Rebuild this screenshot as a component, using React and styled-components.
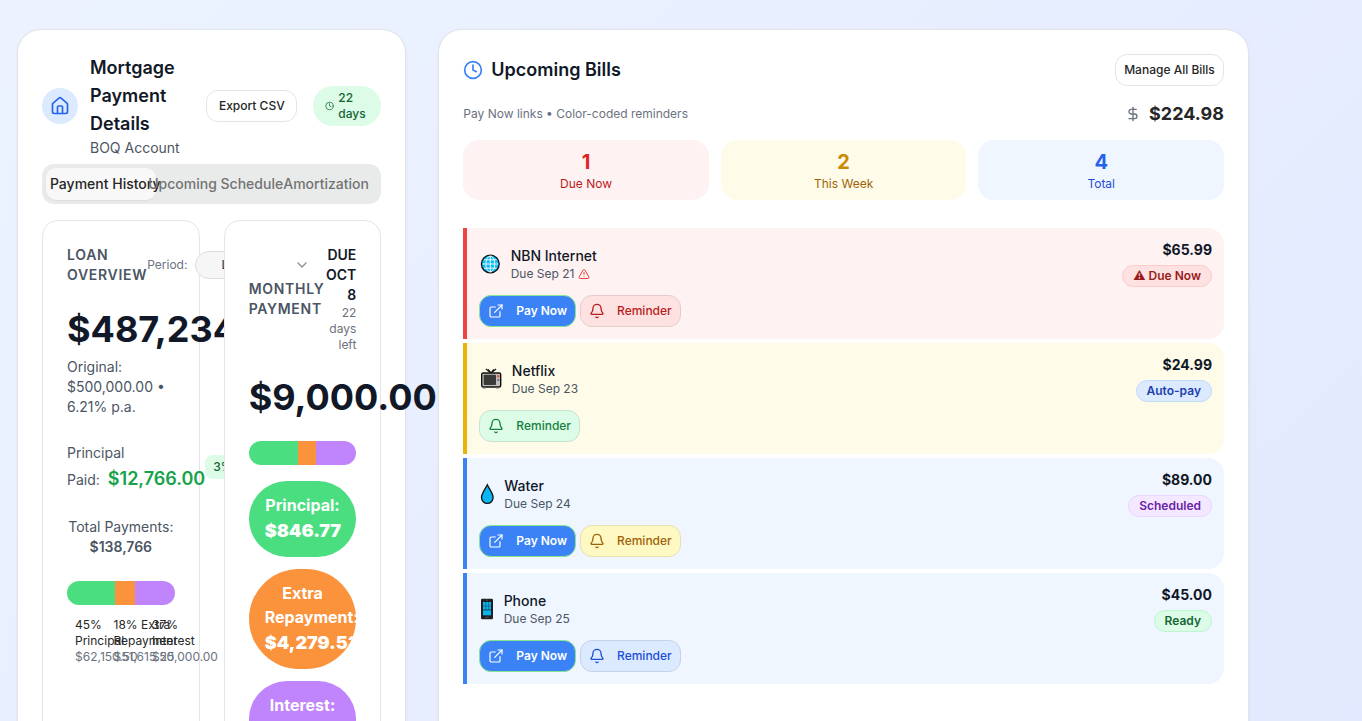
import React from "react";
import styled, { createGlobalStyle } from "styled-components";
import { House, Clock, ChevronDown, DollarSign, ExternalLink, Bell, TriangleAlert } from "lucide-react";

const GlobalStyle = createGlobalStyle`
  *, *::before, *::after { box-sizing: border-box; }
  body { margin: 0; overflow: hidden; font-family: Inter, "Liberation Sans", sans-serif; font-size: 16px; line-height: 24px; color: #262626; }
  p, h2, h3 { margin: 0; font-weight: inherit; }
  button { font-family: inherit; }
  svg { display: block; }
`;

const Page = styled.main`
  height: 100vh;
  overflow: hidden;
  padding: 29px 0 0 17px;
  background: linear-gradient(135deg, #ecf3ff 0%, #e3e9fe 100%);
`;

const Columns = styled.div`
  display: grid;
  grid-template-columns: 389.33px 810.67px;
  gap: 32px;
`;

const Panel = styled.section`
  height: 760px;
  min-width: 0;
  padding: 24px;
  background: #fff;
  border: 1px solid #e2e4e8;
  border-radius: 24px;
  box-shadow: 0 1px 3px rgba(0, 0, 0, 0.06);
`;

const MortgageHeader = styled.header`
  display: flex;
  align-items: center;
  height: 104px;
`;

const HomeBadge = styled.div`
  display: flex;
  flex: none;
  align-items: center;
  justify-content: center;
  width: 36px;
  height: 36px;
  margin-right: 12px;
  border-radius: 50%;
  background: #dbeafe;
  color: #2563eb;
`;

const MortgageHeading = styled.div`
  width: 116.3px;
  flex: none;
`;

const Title = styled.h2`
  font-size: 18px;
  line-height: 28px;
  font-weight: 600;
  color: #111827;
`;

const Account = styled.p`
  font-size: 14px;
  line-height: 20px;
  color: #4b5563;
`;

const OutlineButton = styled.button`
  flex: none;
  width: ${(p) => p.$width}px;
  height: 32px;
  padding: 0;
  border: 1px solid #e3e5e4;
  border-radius: 12px;
  background: #fff;
  color: #262626;
  font-size: 12px;
  line-height: 16px;
  font-weight: 500;
  white-space: nowrap;
`;

const DaysBadge = styled.div`
  display: flex;
  align-items: center;
  gap: 4px;
  width: 68px;
  height: 40px;
  margin-left: 16px;
  padding: 4px 12px;
  border-radius: 20px;
  background: #dcfce7;
  color: #166534;
  font-size: 12px;
  line-height: 16px;
  font-weight: 500;
`;

const Tabs = styled.div`
  display: grid;
  grid-template-columns: repeat(3, minmax(0, 1fr));
  height: 40px;
  margin-top: 6px;
  padding: 4px;
  border-radius: 12px;
  background: #e9ebea;
`;

const Tab = styled.button`
  display: flex;
  align-items: center;
  justify-content: center;
  min-width: 0;
  padding: 0 0 0 8px;
  border: 0;
  border-radius: 10px;
  background: ${(p) => (p.$active ? "#f8f8f8" : "transparent")};
  box-shadow: ${(p) => (p.$active ? "0 1px 2px rgba(0,0,0,0.06)" : "none")};
  color: ${(p) => (p.$active ? "#262626" : "#737373")};
  font-size: 14px;
  line-height: 20px;
  font-weight: 500;
  white-space: nowrap;
`;

const LoanGrid = styled.div`
  display: grid;
  grid-template-columns: repeat(2, minmax(0, 1fr));
  gap: 24px;
  margin-top: 16px;
`;

const LoanCard = styled.article`
  height: 620px;
  min-width: 0;
  padding: 24px;
  border: 1px solid #e3e5e8;
  border-radius: 16px;
  background: #fff;
`;

const PaymentCard = styled(LoanCard)`
  position: relative;
`;

const CardHead = styled.div`
  display: flex;
  align-items: center;
  justify-content: space-between;
  height: ${(p) => p.$height}px;
`;

const Overline = styled.h3`
  flex: none;
  font-size: 14px;
  line-height: 20px;
  font-weight: 600;
  letter-spacing: 0.7px;
  color: #4b5563;
`;

const Period = styled.div`
  display: flex;
  align-items: center;
  flex: none;
  gap: 8px;
  color: #6b7280;
  font-size: 12px;
  line-height: 16px;
`;

const Select = styled.div`
  display: flex;
  align-items: center;
  justify-content: space-between;
  width: 128px;
  height: 28px;
  padding: 0 12px;
  border: 1px solid #dcdede;
  border-radius: 14px;
  background: #f6f6f6;
  color: #262626;
`;

const SelectValue = styled.span`
  padding-left: 13px;
`;

const SelectChevron = styled(ChevronDown)`
  position: relative;
  z-index: 1;
  opacity: 0.5;
`;

const Amount = styled.p`
  margin-top: 24px;
  font-size: 36px;
  line-height: 40px;
  font-weight: 700;
  letter-spacing: ${(p) => p.$tracking || 0}px;
  color: #111827;
  white-space: nowrap;
`;

const LoanTerms = styled.p`
  margin-top: 8px;
  color: #4b5563;
  font-size: 14px;
  line-height: 20px;
`;

const PaidRow = styled.div`
  display: flex;
  align-items: center;
  height: 52px;
  margin-top: 24px;
`;

const PaidText = styled.div`
  flex: none;
  color: #4b5563;
  font-size: 14px;
  line-height: 24px;
`;

const PaidLine = styled.div`
  display: flex;
  align-items: baseline;
  gap: 8px;
  line-height: 28px;
`;

const PaidValue = styled.span`
  font-size: 18px;
  font-weight: 600;
  color: #16a34a;
`;

const PaidPercent = styled.span`
  flex: none;
  padding: 4px 8px;
  border-radius: 8px;
  background: #dcfce7;
  color: #166534;
  font-size: 12px;
  line-height: 16px;
  font-weight: 500;
`;

const Totals = styled.p`
  margin-top: 24px;
  color: #4b5563;
  font-size: 14px;
  line-height: 20px;
  text-align: center;
  white-space: nowrap;

  strong { display: block; font-weight: 600; }
`;

const SplitBar = styled.div`
  display: grid;
  grid-template-columns: ${(p) => p.$split};
  height: 24px;
  margin-top: 24px;
  overflow: hidden;
  border-radius: 12px;
`;

const Segment = styled.div`
  background: ${(p) => p.$color};
`;

const Legend = styled.div`
  display: grid;
  grid-template-columns: repeat(3, minmax(0, 1fr));
  gap: 8px;
  margin-top: 12px;
`;

const LegendItem = styled.div`
  padding-left: 8px;
  font-size: 12px;
  line-height: 16px;
  white-space: nowrap;
  color: #262626;

  small { display: block; font-size: 12px; color: #6b7280; }
`;

const DueDate = styled.div`
  width: 31px;
  flex: none;
  text-align: right;
  font-size: 14px;
  line-height: 20px;
  font-weight: 600;
  color: #111827;

  small { display: block; font-size: 12px; line-height: 16px; font-weight: 400; color: #6b7280; }
`;

const Pills = styled.div`
  display: grid;
  gap: 12px;
  margin-top: 16px;
`;

const Pill = styled.div`
  overflow: hidden;
  padding: 12px 16px;
  border-radius: 50px;
  background: ${(p) => p.$color};
  color: #fff;
  font-size: 16px;
  line-height: 24px;
  font-weight: 700;
  text-align: center;

  strong { display: block; font-size: 18px; line-height: 28px; }
`;

const BillsHeader = styled.header`
  display: flex;
  align-items: center;
  justify-content: space-between;
  height: 32px;
`;

const BillsTitle = styled.div`
  display: flex;
  align-items: center;
  gap: 8px;
  color: #3b82f6;
`;

const BillsSummary = styled.div`
  display: flex;
  align-items: center;
  justify-content: space-between;
  margin-top: 14px;
  color: #6b7280;
  font-size: 12px;
  line-height: 16px;
`;

const BillsTotal = styled.div`
  display: flex;
  align-items: center;
  gap: 8px;

  strong { font-size: 18px; line-height: 28px; font-weight: 700; color: #262626; }
`;

const Stats = styled.div`
  display: grid;
  grid-template-columns: repeat(3, 1fr);
  gap: 12px;
  margin-top: 12px;
`;

const Stat = styled.div`
  padding: 8px;
  border-radius: 16px;
  background: ${(p) => p.$bg};
  color: ${(p) => p.$label};
  font-size: 12px;
  line-height: 16px;
  text-align: center;

  strong { display: block; font-size: 20px; line-height: 28px; color: ${(p) => p.$num}; }
`;

const BillList = styled.div`
  display: grid;
  gap: 4px;
  margin-top: 28px;
`;

const Bill = styled.article`
  height: 111px;
  padding: 12px;
  border-left: 4px solid ${(p) => p.$edge};
  border-radius: 0 16px 16px 0;
  background: ${(p) => p.$bg};
`;

const BillTop = styled.div`
  display: flex;
  align-items: center;
  justify-content: space-between;
  height: 47px;
`;

const BillIdentity = styled.div`
  display: flex;
  align-items: center;
`;

const BillIcon = styled.div`
  width: ${(p) => p.$width}px;
  flex: none;
  margin-right: 8px;
`;

const BillName = styled.h3`
  font-size: 14px;
  line-height: 20px;
  font-weight: 500;
  color: #111827;
`;

const BillDue = styled.p`
  display: flex;
  align-items: center;
  gap: 4px;
  font-size: 12px;
  line-height: 16px;
  color: #4b5563;

  svg { color: #ef4444; }
`;

const BillRight = styled.div`
  display: flex;
  flex-direction: column;
  align-items: flex-end;
  gap: 5px;
  font-size: 14px;
  line-height: 20px;
  font-weight: 700;
  color: #111827;
`;

const Status = styled.span`
  padding: 2px 10px;
  border: 1px solid ${(p) => p.$border};
  border-radius: 11px;
  background: ${(p) => p.$bg};
  color: ${(p) => p.$fg};
  font-size: 12px;
  line-height: 16px;
  font-weight: 600;
  white-space: nowrap;
`;

const Actions = styled.div`
  display: flex;
  gap: 4px;
  margin-top: 8px;
`;

const ActionButton = styled.button`
  display: flex;
  align-items: center;
  gap: 12px;
  height: 32px;
  padding: 0 8px;
  border: 1px solid ${(p) => p.$border};
  border-radius: 12px;
  background: ${(p) => p.$bg};
  color: ${(p) => p.$fg};
  font-size: 12px;
  line-height: 16px;
  font-weight: ${(p) => p.$weight || 500};
  white-space: nowrap;
`;

const GREEN = "#4ade80";
const ORANGE = "#fb923c";
const PURPLE = "#c084fc";

const Globe = () => (
  <svg width="23" height="20" viewBox="0 0 23 20">
    <circle cx="11.3" cy="10" r="8.9" fill="#10b9f2" stroke="#111" strokeWidth="1.3" />
    <g fill="none" stroke="#e8f8ff" strokeWidth="1">
      <path d="M11.3 2v16M3.5 10h15.6M5 5.8h12.6M5 14.2h12.6" />
      <ellipse cx="11.3" cy="10" rx="4.4" ry="8" />
    </g>
  </svg>
);

const Television = () => (
  <svg width="24.5" height="22" viewBox="0 0 24.5 22">
    <path d="M7 1l5 4 5-4M9 1.5l3 3.5 3-3.5" fill="none" stroke="#111" strokeWidth="1.3" />
    <rect x="2.7" y="5" width="19" height="14" rx="1.5" fill="#bdbdbd" stroke="#111" strokeWidth="1.4" />
    <rect x="4.7" y="6.7" width="12.3" height="10.4" rx="0.8" fill="#3a3a3a" />
    <rect x="18.2" y="7.2" width="2.2" height="2.2" fill="#f04428" />
    <rect x="18.2" y="11" width="2.2" height="2" fill="#777" />
    <path d="M4 20h3M17 20h3" stroke="#777" strokeWidth="1" />
  </svg>
);

const Drop = () => (
  <svg width="17" height="22" viewBox="0 0 17 22">
    <path d="M8.3 1.8C6.5 6 2.5 10.2 2.5 14.6a5.8 5.8 0 0 0 11.6 0C14.1 10.2 10.1 6 8.3 1.8Z" fill="#08b5f0" stroke="#111" strokeWidth="1.3" />
  </svg>
);

const Mobile = () => (
  <svg width="16" height="22" viewBox="0 0 16 22">
    <rect x="2" y="0.7" width="12" height="20.6" rx="1.3" fill="#202020" />
    <rect x="4" y="4" width="8" height="13.3" fill="#09b5ef" />
    <path d="M4 8h8M4 11.5h8M4 12.3h8M6.8 4v7.5M9.6 4v7.5" stroke="#17617c" strokeWidth="0.8" />
    <path d="M6.3 19.3h3.4M6.8 2.2h2.4" stroke="#666" strokeWidth="0.7" />
  </svg>
);

const stats = [
  { n: 1, label: "Due Now", bg: "#fef2f2", num: "#dc2626", fg: "#b91c1c" },
  { n: 2, label: "This Week", bg: "#fefce8", num: "#ca8a04", fg: "#a16207" },
  { n: 4, label: "Total", bg: "#eff6ff", num: "#2563eb", fg: "#1d4ed8" },
];

const bills = [
  {
    name: "NBN Internet", due: "Due Sep 21", alert: true, icon: Globe, iconWidth: 23.3,
    amount: "$65.99", edge: "#ef4444", bg: "#fef2f2", pay: true,
    status: { text: "⚠ Due Now", bg: "#fee2e2", border: "#fecaca", fg: "#991b1b" },
    reminder: { bg: "#fee2e2", border: "#e6cbcb", fg: "#b91c1c" },
  },
  {
    name: "Netflix", due: "Due Sep 23", icon: Television, iconWidth: 24.5,
    amount: "$24.99", edge: "#eab308", bg: "#fefce8",
    status: { text: "Auto-pay", bg: "#dbeafe", border: "#bfdbfe", fg: "#1e40af" },
    reminder: { bg: "#dcfce7", border: "#c6e3d0", fg: "#15803d" },
  },
  {
    name: "Water", due: "Due Sep 24", icon: Drop, iconWidth: 17,
    amount: "$89.00", edge: "#3b82f6", bg: "#eff6ff", pay: true,
    status: { text: "Scheduled", bg: "#f3e8ff", border: "#e9d5ff", fg: "#6b21a8" },
    reminder: { bg: "#fef9c3", border: "#e5e0b0", fg: "#a16207" },
  },
  {
    name: "Phone", due: "Due Sep 25", icon: Mobile, iconWidth: 16.3,
    amount: "$45.00", edge: "#3b82f6", bg: "#eff6ff", pay: true,
    status: { text: "Ready", bg: "#dcfce7", border: "#bbf7d0", fg: "#166534" },
    reminder: { bg: "#dbeafe", border: "#c5d3e6", fg: "#1d4ed8" },
  },
];

function Split({ split }) {
  return (
    <SplitBar $split={split}>
      <Segment $color={GREEN} />
      <Segment $color={ORANGE} />
      <Segment $color={PURPLE} />
    </SplitBar>
  );
}

function MortgagePanel() {
  return (
    <Panel>
      <MortgageHeader>
        <HomeBadge><House size={20} /></HomeBadge>
        <MortgageHeading>
          <Title>Mortgage<br />Payment<br />Details</Title>
          <Account>BOQ Account</Account>
        </MortgageHeading>
        <OutlineButton $width={91}>Export CSV</OutlineButton>
        <DaysBadge>
          <Clock width={9} height={12} />
          <span>22<br />days</span>
        </DaysBadge>
      </MortgageHeader>

      <Tabs>
        <Tab $active>Payment History</Tab>
        <Tab>Upcoming Schedule</Tab>
        <Tab>Amortization</Tab>
      </Tabs>

      <LoanGrid>
        <LoanCard>
          <CardHead $height={40}>
            <Overline>LOAN<br />OVERVIEW</Overline>
            <Period>
              Period:
              <Select>
                <SelectValue>Last Year</SelectValue>
                <SelectChevron size={16} />
              </Select>
            </Period>
          </CardHead>
          <Amount>$487,234.00</Amount>
          <LoanTerms>Original: $500,000.00 • 6.21% p.a.</LoanTerms>
          <PaidRow>
            <PaidText>
              Principal
              <PaidLine>Paid: <PaidValue>$12,766.00</PaidValue></PaidLine>
            </PaidText>
            <PaidPercent>3% paid</PaidPercent>
          </PaidRow>
          <Totals>Total Payments: <strong>$138,766</strong></Totals>
          <Split split="45% 18% 37%" />
          <Legend>
            <LegendItem>45%<br />Principal<small>$62,150.50</small></LegendItem>
            <LegendItem>18% Extra<br />Repayment<small>$51,615.50</small></LegendItem>
            <LegendItem>37%<br />Interest<small>$25,000.00</small></LegendItem>
          </Legend>
        </LoanCard>

        <PaymentCard>
          <CardHead $height={108}>
            <Overline>MONTHLY<br />PAYMENT</Overline>
            <DueDate>
              DUE<br />OCT<br />8
              <small>22<br />days<br />left</small>
            </DueDate>
          </CardHead>
          <Amount>$9,000.00</Amount>
          <Split split="46% 17% 37%" />
          <Pills>
            <Pill $color={GREEN}>Principal:<strong>$846.77</strong></Pill>
            <Pill $color={ORANGE}>Extra Repayment:<strong>$4,279.53</strong></Pill>
            <Pill $color={PURPLE}>Interest:<strong>$3,873.70</strong></Pill>
          </Pills>
        </PaymentCard>
      </LoanGrid>
    </Panel>
  );
}

function BillItem({ bill }) {
  const Icon = bill.icon;
  const { status, reminder } = bill;
  return (
    <Bill $edge={bill.edge} $bg={bill.bg}>
      <BillTop>
        <BillIdentity>
          <BillIcon $width={bill.iconWidth}><Icon /></BillIcon>
          <div>
            <BillName>{bill.name}</BillName>
            <BillDue>{bill.due}{bill.alert && <TriangleAlert size={12} />}</BillDue>
          </div>
        </BillIdentity>
        <BillRight>
          {bill.amount}
          <Status $bg={status.bg} $border={status.border} $fg={status.fg}>{status.text}</Status>
        </BillRight>
      </BillTop>
      <Actions>
        {bill.pay && (
          <ActionButton $bg="#3b82f6" $border="#86e58f" $fg="#fff" $weight={600}>
            <ExternalLink size={16} strokeWidth={1.8} />Pay Now
          </ActionButton>
        )}
        <ActionButton $bg={reminder.bg} $border={reminder.border} $fg={reminder.fg}>
          <Bell size={16} />Reminder
        </ActionButton>
      </Actions>
    </Bill>
  );
}

function BillsPanel() {
  return (
    <Panel>
      <BillsHeader>
        <BillsTitle><Clock size={20} /><Title>Upcoming Bills</Title></BillsTitle>
        <OutlineButton $width={109}>Manage All Bills</OutlineButton>
      </BillsHeader>
      <BillsSummary>
        Pay Now links • Color-coded reminders
        <BillsTotal><DollarSign size={16} /><strong>$224.98</strong></BillsTotal>
      </BillsSummary>
      <Stats>
        {stats.map((s) => (
          <Stat key={s.label} $bg={s.bg} $num={s.num} $label={s.fg}><strong>{s.n}</strong>{s.label}</Stat>
        ))}
      </Stats>
      <BillList>
        {bills.map((b) => <BillItem key={b.name} bill={b} />)}
      </BillList>
    </Panel>
  );
}

export default function App() {
  return (
    <Page>
      <GlobalStyle />
      <Columns>
        <MortgagePanel />
        <BillsPanel />
      </Columns>
    </Page>
  );
}
